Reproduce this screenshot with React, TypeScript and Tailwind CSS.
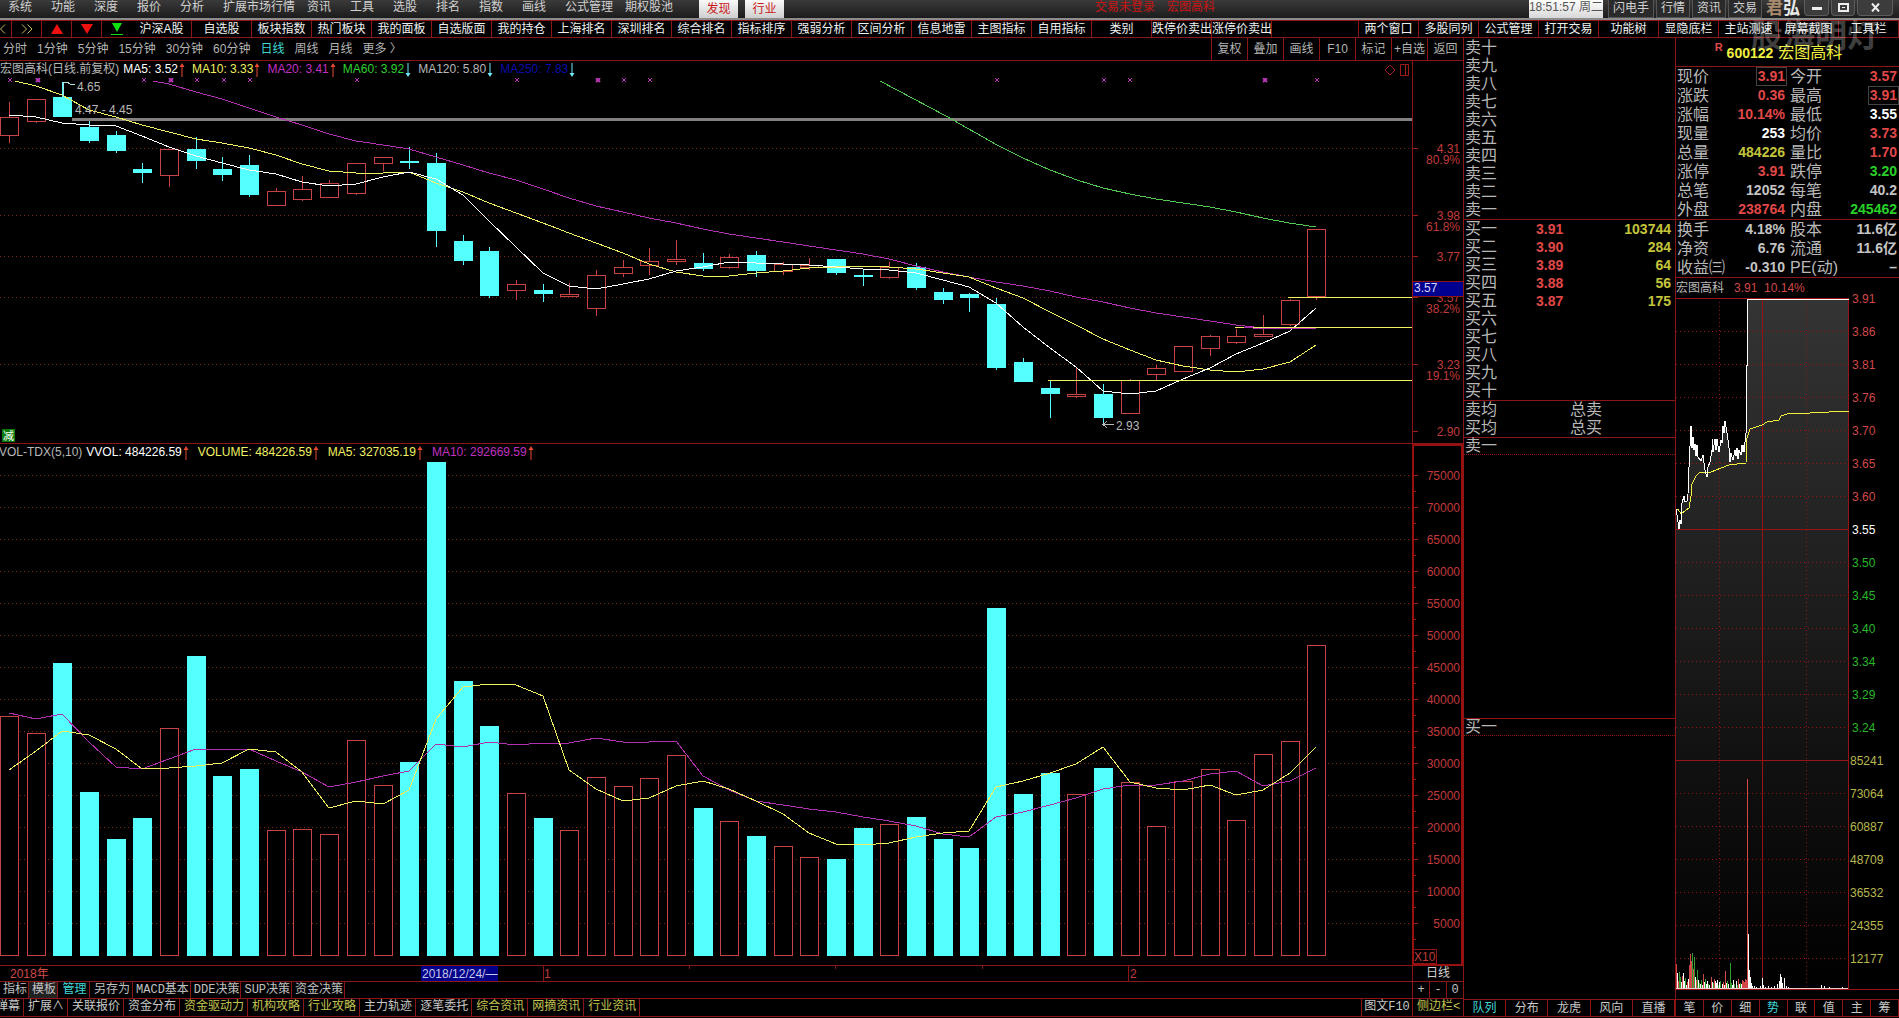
import { clsx } from "clsx";

type Tone = "red" | "green" | "white" | "yellow" | "gray";

type Candle = [kind: "up" | "down", high: number, top: number, bottom: number, low: number];

const toneClass: Record<Tone, string> = {
  red: "text-[#e04848]",
  green: "text-[#28d028]",
  white: "text-white",
  yellow: "text-[#c4c43c]",
  gray: "text-[#c4c4c4]",
};

const menuItems = [
  "系统", "功能", "深度", "报价", "分析", "扩展市场行情", "资讯", "工具",
  "选股", "排名", "指数", "画线", "公式管理", "期权股池",
];

const toolbarLeft = [
  "沪深A股", "自选股", "板块指数", "热门板块", "我的面板", "自选版面", "我的持仓",
  "上海排名", "深圳排名", "综合排名", "指标排序", "强弱分析", "区间分析", "信息地雷",
  "主图指标", "自用指标", "类别", "跌停价卖出", "涨停价卖出",
];

const toolbarRight = [
  "两个窗口", "多股同列", "公式管理", "打开交易", "功能树", "显隐底栏", "主站测速", "屏幕截图", "工具栏",
];

const periods = ["分时", "1分钟", "5分钟", "15分钟", "30分钟", "60分钟", "日线", "周线", "月线", "更多 〉"];
const chartActions = ["复权", "叠加", "画线", "F10", "标记", "+自选", "返回"];

const priceLegend = [
  { text: "MA5: 3.52", className: "text-white", up: true },
  { text: "MA10: 3.33", className: "text-[#f0f060]", up: true },
  { text: "MA20: 3.41", className: "text-[#c030c0]", up: true },
  { text: "MA60: 3.92", className: "text-[#30d030]", up: false },
  { text: "MA120: 5.80", className: "text-[#b8b8b8]", up: false },
  { text: "MA250: 7.83", className: "text-[#0c0ca8]", up: false },
];

const volumeLegend = [
  { text: "VVOL: 484226.59", className: "text-white", up: true },
  { text: "VOLUME: 484226.59", className: "text-[#f0f060]", up: true },
  { text: "MA5: 327035.19", className: "text-[#f0f060]", up: true },
  { text: "MA10: 292669.59", className: "text-[#c030c0]", up: true },
];

const candles: Candle[] = [
  ["up", 24, 39, 58, 65], ["up", 21, 21, 44, 45], ["down", 4, 19, 39, 39], ["down", 43, 49, 63, 65],
  ["down", 53, 57, 73, 75], ["down", 85, 91, 95, 105], ["up", 71, 71, 98, 109], ["down", 59, 71, 83, 91],
  ["down", 79, 91, 97, 103], ["down", 77, 87, 117, 119], ["up", 110, 113, 128, 128], ["up", 98, 111, 122, 123],
  ["up", 102, 105, 120, 120], ["up", 85, 85, 116, 117], ["up", 79, 79, 86, 93], ["down", 69, 83, 85, 91],
  ["down", 75, 85, 153, 169], ["down", 157, 163, 183, 187], ["down", 169, 173, 218, 220], ["up", 202, 206, 213, 222],
  ["down", 206, 212, 216, 224], ["up", 205, 216, 219, 219], ["up", 192, 197, 231, 238], ["up", 182, 189, 196, 199],
  ["up", 170, 183, 188, 197], ["up", 162, 181, 184, 187], ["down", 175, 185, 191, 193], ["up", 176, 179, 190, 191],
  ["down", 173, 177, 193, 199], ["up", 184, 186, 194, 197], ["up", 180, 187, 190, 192], ["down", 181, 181, 195, 197],
  ["down", 191, 197, 199, 208], ["up", 184, 189, 200, 201], ["down", 185, 189, 210, 212], ["down", 210, 214, 222, 226],
  ["down", 215, 216, 220, 234], ["down", 220, 226, 290, 292], ["down", 280, 284, 304, 304], ["down", 303, 310, 316, 340],
  ["up", 289, 316, 319, 320], ["down", 306, 316, 340, 348], ["up", 301, 302, 336, 336], ["up", 287, 290, 297, 302],
  ["up", 268, 268, 294, 294], ["up", 257, 258, 271, 278], ["up", 251, 258, 265, 266], ["up", 237, 256, 259, 259],
  ["up", 221, 222, 247, 248], ["up", 151, 151, 219, 222],
];

const ma5 = [
  37, 39, 45, 47, 48, 58, 69, 78, 85, 92, 96, 104, 108, 106, 99, 94, 101, 117, 143, 169, 195, 208, 211, 206, 201,
  193, 189, 184, 185, 186, 187, 189, 191, 192, 195, 202, 209, 225, 249, 270, 289, 313, 316, 313, 301, 290, 276, 265, 253, 230,
];
const ma10 = [
  8, 17, 32, 39, 47, 54, 61, 65, 70, 77, 86, 93, 95, 95, 94, 105, 114, 125, 135, 145, 155, 165, 175, 186, 194,
  198, 198, 195, 193, 190, 189, 188, 189, 191, 195, 199, 210, 220, 234, 247, 261, 272, 282, 288, 292, 294, 291, 284, 267,
];
const ma20 = [
  6, 14, 21, 30, 39, 47, 56, 63, 67, 71, 79, 87, 95, 102, 111, 120, 128, 134, 140, 145, 151, 156, 160, 164, 168,
  172, 176, 181, 188, 194, 199, 204, 208, 213, 219, 224, 230, 235, 239, 243, 247, 250, 251, 250,
];
const ma60 =
  "880,3 946,38 997,67 1023,80 1050,92 1077,102 1103,110 1130,116 1156,121 1183,125 1210,129 1236,134 1263,140 1289,145 1316,149";

const volumeTops = [
  256, 273, 203, 332, 379, 358, 268, 196, 316, 309, 370, 369, 374, 280, 325, 302, 2, 221, 266, 333, 358, 370, 317, 326, 318,
  295, 348, 361, 376, 386, 397, 399, 368, 364, 357, 379, 388, 148, 334, 313, 334, 308, 322, 366, 321, 309, 360, 294, 281, 185,
];
const volumeMa5 = [
  310, 291, 271, 275, 289, 309, 308, 306, 303, 289, 292, 312, 348, 341, 344, 330, 259, 227, 224, 225, 236, 310, 329, 341, 338,
  326, 321, 329, 341, 354, 373, 384, 385, 383, 377, 373, 371, 327, 321, 313, 304, 287, 322, 328, 330, 325, 335, 330, 313, 287,
];
const volumeMa10 = [
  253, 259, 254, 282, 307, 309, 299, 289, 289, 289, 301, 312, 327, 322, 316, 311, 284, 287, 282, 285, 283, 283, 278, 282, 282,
  281, 316, 330, 341, 345, 349, 352, 357, 361, 366, 374, 377, 357, 352, 345, 338, 329, 325, 325, 321, 314, 311, 326, 321, 308,
];

const crossMarks = [10, 144, 197, 224, 250, 357, 517, 624, 650, 997, 1104, 1130, 1317];
const boldMarks = [38, 171, 598, 1265];

const priceGrid = [70, 137, 178, 219, 286];
const priceAxis = [
  { y: 71, text: "4.31" },
  { y: 82, text: "80.9%" },
  { y: 138, text: "3.98" },
  { y: 149, text: "61.8%" },
  { y: 179, text: "3.77" },
  { y: 220, text: "3.57" },
  { y: 231, text: "38.2%" },
  { y: 287, text: "3.23" },
  { y: 298, text: "19.1%" },
  { y: 354, text: "2.90" },
];

const volumeAxis = Array.from({ length: 15 }, (_, i) => ({
  y: Math.round(14.5 + i * 32.07),
  text: String(75000 - i * 5000),
}));

const indicatorTabs = ["指标", "模板", "管理", "另存为", "MACD基本", "DDE决策", "SUP决策", "资金决策"];
const infoTabs = [
  { text: "弹幕", hot: false },
  { text: "扩展∧", hot: false },
  { text: "关联报价", hot: false },
  { text: "资金分布", hot: false },
  { text: "资金驱动力", hot: true },
  { text: "机构攻略", hot: true },
  { text: "行业攻略", hot: true },
  { text: "主力轨迹", hot: false },
  { text: "逐笔委托", hot: false },
  { text: "综合资讯", hot: true },
  { text: "网摘资讯", hot: true },
  { text: "行业资讯", hot: true },
];

const asks = ["卖十", "卖九", "卖八", "卖七", "卖六", "卖五", "卖四", "卖三", "卖二", "卖一"];
const bids = [
  ["买一", "3.91", "103744"],
  ["买二", "3.90", "284"],
  ["买三", "3.89", "64"],
  ["买四", "3.88", "56"],
  ["买五", "3.87", "175"],
  ["买六", "", ""],
  ["买七", "", ""],
  ["买八", "", ""],
  ["买九", "", ""],
  ["买十", "", ""],
];

type QuoteRow = { a: string; av: string; at: Tone; b: string; bv: string; bt: Tone; boxA?: boolean; boxB?: boolean };

const quoteRows: QuoteRow[] = [
  { a: "现价", av: "3.91", at: "red", b: "今开", bv: "3.57", bt: "red", boxA: true },
  { a: "涨跌", av: "0.36", at: "red", b: "最高", bv: "3.91", bt: "red", boxB: true },
  { a: "涨幅", av: "10.14%", at: "red", b: "最低", bv: "3.55", bt: "white" },
  { a: "现量", av: "253", at: "white", b: "均价", bv: "3.73", bt: "red" },
  { a: "总量", av: "484226", at: "yellow", b: "量比", bv: "1.70", bt: "red" },
  { a: "涨停", av: "3.91", at: "red", b: "跌停", bv: "3.20", bt: "green" },
  { a: "总笔", av: "12052", at: "gray", b: "每笔", bv: "40.2", bt: "gray" },
  { a: "外盘", av: "238764", at: "red", b: "内盘", bv: "245462", bt: "green" },
];

const fundamentals: QuoteRow[] = [
  { a: "换手", av: "4.18%", at: "gray", b: "股本", bv: "11.6亿", bt: "gray" },
  { a: "净资", av: "6.76", at: "gray", b: "流通", bv: "11.6亿", bt: "gray" },
  { a: "收益㈢", av: "-0.310", at: "gray", b: "PE(动)", bv: "–", bt: "gray" },
];

const intradayAxis = [
  "3.91", "3.86", "3.81", "3.76", "3.70", "3.65", "3.60", "3.55", "3.50", "3.45", "3.40", "3.34", "3.29", "3.24",
  "85241", "73064", "60887", "48709", "36532", "24355", "12177",
];

const intradayPrice =
  "0,211 1,217 3,231 4,222 5,226 6,205 8,198 9,204 11,203 12,196 13,169 15,128 16,150 17,139 18,152 19,146 20,158 21,147 22,159 25,163 27,157 29,172 31,179 32,169 34,164 36,152 36,141 37,154 39,141 40,152 41,141 43,154 45,142 46,145 47,128 48,135 49,123 51,135 52,142 53,150 54,164 55,155 57,162 59,152 60,158 61,150 62,161 63,152 65,157 66,147 67,154 67,147 68,154 70,135 70,67 71,67 71,1 173,1";
const intradayAverage =
  "0,211 2,211 5,216 9,213 13,210 15,198 16,186 20,178 23,175 35,174 45,170 53,167 70,165 71,140 74,131 86,127 91,124 103,122 105,118 111,116 134,115 173,113";

const intradayVolume: [number, number, string][] = [
  [0, 25, "r"], [1, 16, "w"], [2, 8, "r"], [3, 17, "g"], [4, 12, "g"], [5, 7, "w"], [6, 13, "r"], [7, 16, "w"],
  [8, 8, "w"], [9, 11, "g"], [10, 4, "w"], [11, 7, "r"], [12, 10, "w"], [13, 24, "r"], [14, 35, "r"], [15, 28, "r"],
  [16, 36, "g"], [17, 20, "r"], [18, 32, "g"], [19, 12, "w"], [20, 9, "r"], [21, 19, "g"], [22, 9, "w"], [23, 6, "g"],
  [24, 5, "w"], [25, 9, "g"], [26, 4, "w"], [27, 15, "r"], [28, 7, "w"], [29, 10, "g"], [30, 5, "w"], [31, 8, "w"],
  [32, 5, "g"], [33, 4, "w"], [35, 12, "r"], [36, 7, "w"], [37, 6, "g"], [38, 10, "r"], [39, 8, "w"], [40, 6, "w"],
  [41, 9, "w"], [42, 4, "g"], [43, 7, "w"], [44, 8, "g"], [46, 5, "w"], [47, 7, "r"], [48, 4, "w"], [49, 18, "r"],
  [50, 6, "w"], [51, 8, "g"], [52, 5, "w"], [54, 26, "g"], [55, 6, "g"], [56, 4, "w"], [57, 9, "w"], [58, 5, "g"],
  [60, 8, "w"], [61, 4, "g"], [62, 10, "r"], [63, 5, "w"], [64, 6, "g"], [65, 5, "w"], [66, 9, "r"], [67, 8, "r"],
  [68, 7, "r"], [69, 10, "r"], [70, 9, "r"], [71, 210, "r"], [72, 55, "w"], [73, 19, "w"], [74, 12, "w"], [75, 6, "w"],
  [76, 3, "w"], [78, 3, "w"], [80, 2, "w"], [84, 3, "w"], [86, 11, "w"], [87, 4, "w"], [89, 2, "w"], [92, 3, "w"],
  [95, 2, "w"], [98, 3, "w"], [101, 5, "w"], [103, 8, "w"], [104, 15, "w"], [105, 12, "w"], [106, 6, "w"], [108, 11, "w"],
  [110, 3, "w"], [112, 2, "w"], [145, 4, "w"], [148, 3, "w"], [153, 2, "w"], [166, 2, "w"],
];

const barFill: Record<string, string> = { r: "#d04848", g: "#2f9e2f", w: "#ffffff" };

function candleX(index: number) {
  return Math.round(9 + index * 26.68);
}

function toPoints(values: number[], from = 0) {
  return values.map((y, i) => `${candleX(i + from)},${y}`).join(" ");
}

function TitleBar() {
  return (
    <header className="flex h-[18px] items-start bg-linear-to-b from-[#3a3a3a] to-[#1c1c1c] leading-[15px] text-[#d0d0d0]">
      <nav className="flex">
        {menuItems.map((item) => (
          <button key={item} type="button" className="min-w-[43px] pr-[4px] pl-[8px] text-left whitespace-nowrap">
            {item}
          </button>
        ))}
      </nav>
      <div className="ml-[22px] flex gap-[7px] text-[#c81818]">
        {["发现", "行业"].map((item) => (
          <button key={item} type="button" className="h-[18px] w-[39px] bg-linear-to-b from-[#fafafa] to-[#cfcfcf] leading-[15px]">
            {item}
          </button>
        ))}
      </div>
      <div className="ml-auto flex gap-3 pr-[314px] text-[#c81414]">
        <span>交易未登录</span>
        <span>宏图高科</span>
      </div>
      <time className="h-[18px] w-[74px] bg-linear-to-b from-white to-[#d8d8d8] text-center text-[#555] whitespace-nowrap">
        18:51:57 周二
      </time>
      <div className="ml-[5px] flex gap-[2px]">
        {["闪电手", "行情", "资讯", "交易"].map((item) => (
          <button key={item} type="button" className="h-[18px] border-x border-b border-[#555] bg-[#2a2a2a] px-[4px] leading-[15px]">
            {item}
          </button>
        ))}
      </div>
      <div className="ml-[4px] flex w-[36px] text-[17px] leading-[17px] font-bold">
        <span className="text-[#a88a6c]">君</span>
        <span className="text-[#e8e8e8]">弘</span>
      </div>
      <div className="flex gap-[2px] pr-[6px] pl-[2px]">
        <button type="button" aria-label="最小化" className="flex h-[16px] w-[25px] items-center justify-center rounded-b border border-t-0 border-[#5c5c5c] bg-[#3c3c3c]">
          <svg width="10" height="10" viewBox="0 0 10 10"><rect x="0" y="4" width="10" height="3" fill="#eee" /></svg>
        </button>
        <button type="button" aria-label="最大化" className="flex h-[16px] w-[24px] items-center justify-center rounded-b border border-t-0 border-[#5c5c5c] bg-[#3c3c3c]">
          <svg width="11" height="9" viewBox="0 0 11 9"><rect x="1" y="1" width="9" height="7" fill="none" stroke="#eee" strokeWidth="2" /><rect x="4" y="4" width="3" height="1" fill="#eee" /></svg>
        </button>
        <button type="button" aria-label="关闭" className="flex h-[16px] w-[36px] items-center justify-center rounded-b border border-t-0 border-[#5c5c5c] bg-[#3c3c3c]">
          <svg width="9" height="9" viewBox="0 0 9 9"><path d="M1 0.5 L8 8.5 M8 0.5 L1 8.5" stroke="#eee" strokeWidth="2" /></svg>
        </button>
      </div>
    </header>
  );
}

function Toolbar() {
  const cell = "w-[60px] border-r border-[#8c1616] text-center whitespace-nowrap";
  const iconCell = "flex w-[30px] items-center justify-center border-r border-[#8c1616]";
  return (
    <div className="flex h-[18px] border-y border-[#8c1616] leading-[16px] text-[#f0f0f0]">
      <button type="button" aria-label="上一页" className="flex w-[12px] items-center border-r border-[#8c1616]">
        <svg width="6" height="10" viewBox="0 0 6 10"><path d="M5 0.5 L0.5 5 L5 9.5" fill="none" stroke="#c8b860" /></svg>
      </button>
      <button type="button" aria-label="下一页" className={iconCell}>
        <svg width="12" height="10" viewBox="0 0 12 10"><path d="M1 0.5 L5.5 5 L1 9.5 M6.5 0.5 L11 5 L6.5 9.5" fill="none" stroke="#c8b860" /></svg>
      </button>
      <button type="button" aria-label="上移" className={iconCell}>
        <svg width="12" height="10" viewBox="0 0 12 10"><path d="M6 0 L12 10 H0 Z" fill="#f01010" /></svg>
      </button>
      <button type="button" aria-label="下移" className={iconCell}>
        <svg width="12" height="10" viewBox="0 0 12 10"><path d="M0 0 H12 L6 10 Z" fill="#f01010" /></svg>
      </button>
      <button type="button" aria-label="到底" className="flex w-[30px] items-center justify-center">
        <svg width="12" height="12" viewBox="0 0 12 12"><path d="M1 0 H11 L6 9 Z M0 11 H12 V12 H0 Z" fill="#10e010" /></svg>
      </button>
      {toolbarLeft.map((item) => (
        <button key={item} type="button" className={cell}>
          {item}
        </button>
      ))}
      <div className="ml-auto flex border-l border-[#8c1616]">
        {toolbarRight.map((item) => (
          <button key={item} type="button" className={cell}>
            {item}
          </button>
        ))}
      </div>
    </div>
  );
}

function PeriodBar() {
  return (
    <div className="flex h-[23px] border-b border-[#8c1616] leading-[23px] text-[#b4b4b4]">
      <div className="flex gap-[10px] pl-[3px]">
        {periods.map((item) => (
          <button key={item} type="button" className={clsx("whitespace-nowrap", item === "日线" && "text-[#40d8d8]")}>
            {item}
          </button>
        ))}
      </div>
      <div className="ml-auto flex">
        {chartActions.map((item) => (
          <button key={item} type="button" className="w-[36px] border-l border-[#8c1616] text-center whitespace-nowrap">
            {item}
          </button>
        ))}
      </div>
    </div>
  );
}

function Legend({ items }: { items: typeof priceLegend }) {
  return (
    <>
      {items.map((item) => (
        <span key={item.text} className={clsx("flex items-center gap-[1px] whitespace-nowrap", item.className)}>
          {item.text}
          <svg width="6" height="14" viewBox="0 0 6 14">
            {item.up ? (
              <path d="M3 0 L5.5 4 H3.5 V14 H2.5 V4 H0.5 Z" fill="#e84830" />
            ) : (
              <path d="M2.5 0 H3.5 V10 H5.5 L3 14 L0.5 10 H2.5 Z" fill="#70e8f8" />
            )}
          </svg>
        </span>
      ))}
    </>
  );
}

function PriceChart() {
  return (
    <section>
      <div className="flex h-[17px] leading-[17px]">
        <div className="flex flex-1 items-center gap-[7px] border-r border-[#8c1616]">
          <span className="-mr-[3px] text-[#b8b8b8]">宏图高科(日线.前复权)</span>
          <Legend items={priceLegend} />
          <svg className="mr-[2px] ml-auto" width="26" height="12" viewBox="0 0 26 12" fill="none" stroke="#a01c1c">
            <path d="M6 1 L11 6 L6 11 L1 6 Z M16.5 0.5 H24.5 V11.5 H16.5 Z M21.5 0.5 V11.5" />
          </svg>
        </div>
        <div className="w-[50px]" />
      </div>
      <svg className="block h-auto w-full" viewBox="0 0 1463 366" fontSize="12" shapeRendering="crispEdges">
        {priceGrid.map((y) => (
          <line key={y} x1="0" x2="1412" y1={y + 0.5} y2={y + 0.5} stroke="#7a2418" strokeDasharray="1 3" />
        ))}
        {[...priceGrid, 353].map((y) => (
          <line key={y} x1="1413" x2="1418" y1={y + 0.5} y2={y + 0.5} stroke="#a01c1c" />
        ))}
        <rect x="72" y="40" width="1340" height="3" fill="#858080" />
        {candles.map(([kind, high, top, bottom, low], i) => {
          const x = candleX(i);
          const color = kind === "up" ? "#c84444" : "#54ffff";
          return (
            <g key={i}>
              <line x1={x + 0.5} x2={x + 0.5} y1={high} y2={top} stroke={color} />
              <line x1={x + 0.5} x2={x + 0.5} y1={bottom} y2={low} stroke={color} />
              {kind === "up" ? (
                <rect x={x - 8.5} y={top + 0.5} width="18" height={Math.max(bottom - top - 1, 1)} fill="none" stroke={color} />
              ) : (
                <rect x={x - 9} y={top} width="19" height={bottom - top} fill={color} />
              )}
            </g>
          );
        })}
        <g fill="none">
          <polyline points={ma60} stroke="#50c850" />
          <polyline points={`153,3 ${toPoints(ma20, 6)}`} stroke="#b030b0" />
          <polyline points={`15,3 ${toPoints(ma10, 1)}`} stroke="#f0f060" />
          <polyline points={toPoints(ma5)} stroke="#ffffff" />
          <path d="M1288 219.5 H1412 M1235 249.5 H1412 M1048 302.5 H1412" stroke="#f0f060" />
          <path d="M1244 249.5 L1262 250.5 H1316" stroke="#b030b0" />
          <path d="M63.5 19 V4 H67 M67 4 L70 6 H75" stroke="#a8e0e0" />
          <path d="M1103.5 348 V346.5 H1114 M1107 343 L1103 346.5 L1107 350" stroke="#b8b8b8" />
        </g>
        <g stroke="#b838b8" fill="none" shapeRendering="auto">
          {crossMarks.map((x) => (
            <path key={x} d={`M${x - 2} 0 L${x + 2} 4 M${x + 2} 0 L${x - 2} 4`} />
          ))}
          {boldMarks.map((x) => (
            <path key={x} d={`M${x - 2} 0 L${x + 2} 4 M${x + 2} 0 L${x - 2} 4`} strokeWidth="2" />
          ))}
        </g>
        <g fill="#b8b8b8">
          <text x="77" y="13">4.65</text>
          <text x="75" y="36">4.47 - 4.45</text>
          <text x="1116" y="352">2.93</text>
        </g>
        <rect x="2" y="351" width="13" height="13" fill="#0a7a0a" />
        <text x="3" y="362" fontSize="11" fill="#ffffff">减</text>
        <g fill="#c03c3c" textAnchor="end">
          {priceAxis.map((label) => (
            <text key={label.y} x="1460" y={label.y + 4}>{label.text}</text>
          ))}
        </g>
        <rect x="1412" y="203" width="51" height="15" fill="#000090" stroke="#8c1616" />
        <text x="1414" y="214" fill="#d8d8f8">3.57</text>
        <path d="M1412.5 0 V366 M0 365.5 H1463" stroke="#8c1616" />
      </svg>
    </section>
  );
}

function VolumeChart() {
  return (
    <section>
      <div className="flex h-[17px] leading-[17px]">
        <div className="flex flex-1 items-center gap-[9px]">
          <span className="-mr-[5px] -ml-[1px] text-[#b8b8b8]">VOL-TDX(5,10)</span>
          <Legend items={volumeLegend} />
        </div>
        <div className="w-[51px] border-x-2 border-t-2 border-[#981010]" />
      </div>
      <svg className="block h-auto w-full" viewBox="0 1 1463 505" fontSize="12" shapeRendering="crispEdges">
        {volumeAxis.map((tick) => (
          <g key={tick.text}>
            <line x1="0" x2="1412" y1={tick.y + 0.5} y2={tick.y + 0.5} stroke="#7a2418" strokeDasharray="1 3" />
            <path d={`M1414 ${tick.y + 0.5} H1418 M1414 ${tick.y + 16.5} H1416`} stroke="#a01c1c" />
            <text x="1460" y={tick.y + 5} textAnchor="end" fill="#c03c3c">{tick.text}</text>
          </g>
        ))}
        {volumeTops.map((top, i) => {
          const x = candleX(i);
          return candles[i][0] === "up" ? (
            <rect key={i} x={x - 8.5} y={top + 0.5} width="18" height={495 - top} fill="#000000" stroke="#c84444" />
          ) : (
            <rect key={i} x={x - 9} y={top} width="19" height={496 - top} fill="#54ffff" />
          );
        })}
        <polyline points={toPoints(volumeMa10)} fill="none" stroke="#b030b0" />
        <polyline points={toPoints(volumeMa5)} fill="none" stroke="#f0f060" />
        <rect x="1413.5" y="489.5" width="23" height="14" fill="none" stroke="#8c1616" />
        <text x="1414" y="501" fill="#c03c3c">X10</text>
        <path d="M1413 0 V505 H1462 V0" fill="none" stroke="#981010" strokeWidth="2" />
        <path d="M0 505.5 H1412" stroke="#8c1616" />
      </svg>
    </section>
  );
}

function TimeAxis() {
  return (
    <div className="flex h-[16px] border-b border-[#8c1616] leading-[15px]">
      <div className="min-w-0 flex-1 border-r border-[#8c1616]">
        <svg className="block h-[15px] w-full" viewBox="0 0 1412 15" fontSize="12">
          <path d="M543.5 0 V15 M689.5 0 V3 M835.5 0 V3 M982.5 0 V3 M1128.5 0 V15" stroke="#8c1616" />
          <text x="10" y="12" fill="#d04848">2018年</text>
          <rect x="421" y="0" width="77" height="15" fill="#000088" />
          <text x="422" y="12" fill="#c8c8e8">2018/12/24/—</text>
          <text x="544" y="12" fill="#c03c3c">1</text>
          <text x="1130" y="12" fill="#c03c3c">2</text>
        </svg>
      </div>
      <button type="button" className="w-[50px] leading-[15px] text-[#d0d0d0]">日线</button>
    </div>
  );
}

function IndicatorTabs() {
  return (
    <div className="flex h-[17px] border-b border-[#8c1616] font-['Liberation_Mono','Noto_Sans_CJK_SC',monospace] leading-[16px] text-[#c0c0c0]">
      {indicatorTabs.map((tab, i) => (
        <button
          key={tab}
          type="button"
          className={clsx(
            "border-r border-[#8c1616] pr-[1px] pl-[3px] whitespace-nowrap",
            i === 1 && "bg-[#222]",
            tab === "管理" && "min-w-[32px] text-[#40d8d8]",
            i === 3 && "min-w-[43px]",
          )}
        >
          {tab}
        </button>
      ))}
      <div className="ml-auto flex w-[51px] border-l border-[#8c1616]">
        <button type="button" className="flex-1 border-r border-[#8c1616]">+</button>
        <button type="button" className="flex-1 border-r border-[#8c1616]">-</button>
        <button type="button" className="flex-1">0</button>
      </div>
    </div>
  );
}

function InfoTabs() {
  return (
    <div className="flex h-[18px] overflow-hidden border-b border-[#8c1616] font-['Liberation_Mono','Noto_Sans_CJK_SC',monospace] leading-[17px] text-[#c8c8c8]">
      {infoTabs.map((tab, i) => (
        <button
          key={tab.text}
          type="button"
          className={clsx(
            "border-r border-[#8c1616] whitespace-nowrap",
            i === 0 ? "-ml-[4px] pr-[3px]" : "pr-[3px] pl-[4px]",
            tab.hot && "text-[#c4c450]",
          )}
        >
          {tab.text}
        </button>
      ))}
      <div className="ml-auto flex">
        <button type="button" className="w-[51px] border-l border-[#8c1616] whitespace-nowrap">图文F10</button>
        <button type="button" className="w-[51px] border-l border-[#8c1616] pl-[1px] text-[#c4c450] whitespace-nowrap">侧边栏&lt;</button>
      </div>
    </div>
  );
}

function BottomTabs({ items, active }: { items: string[]; active: string }) {
  return (
    <div className="flex h-[18px] border-y border-[#8c1616] leading-[16px] text-[#c8c8c8]">
      {items.map((item) => (
        <button
          key={item}
          type="button"
          className={clsx("flex-1 border-r border-[#8c1616]", item === active && "text-[#40d8d8]")}
        >
          {item}
        </button>
      ))}
    </div>
  );
}

function OrderBook() {
  return (
    <aside className="flex w-[212px] shrink-0 flex-col border-l border-[#8c1616] pt-px text-[16px] leading-[18px] text-[#b8b8b8]">
      <table className="w-full border-b border-[#8c1616]">
        <tbody>
          {asks.map((name) => (
            <tr key={name} className="h-[18px]">
              <th scope="row" className="p-0 pl-px text-left font-normal">{name}</th>
            </tr>
          ))}
        </tbody>
      </table>
      <table className="w-full border-b border-[#8c1616]">
        <tbody>
          {bids.map(([name, price, volume]) => (
            <tr key={name} className="h-[18px]">
              <th scope="row" className="w-[72px] p-0 pl-px text-left font-normal">{name}</th>
              <td className="p-0 text-[14px] font-bold text-[#e04848]">{price}</td>
              <td className="p-0 pr-[4px] text-right text-[14px] font-bold text-[#c4c43c]">{volume}</td>
            </tr>
          ))}
        </tbody>
      </table>
      <div className="grid grid-cols-2 border-b border-[#8c1616] pl-px">
        <span>卖均</span>
        <span>总卖</span>
        <span>买均</span>
        <span>总买</span>
      </div>
      <div className="h-[17px] border-b border-dotted border-[#8c1616] pl-px leading-[16px]">卖一</div>
      <div className="flex-1 border-b border-[#8c1616]" />
      <div className="h-[17px] border-b border-dotted border-[#8c1616] pl-px leading-[16px]">买一</div>
      <div className="flex-1" />
      <div className="text-[12px]">
        <BottomTabs items={["队列", "分布", "龙虎", "风向", "直播"]} active="队列" />
      </div>
    </aside>
  );
}

function QuoteTable({ rows }: { rows: QuoteRow[] }) {
  return (
    <table className="w-full table-fixed border-b border-[#8c1616] text-[#b8b8b8]">
      <tbody>
        {rows.map((row) => (
          <tr key={row.a} className="h-[19px] leading-[19px] whitespace-nowrap">
            <th scope="row" className="w-[50px] p-0 pl-[1px] text-left font-normal">{row.a}</th>
            <td className={clsx("w-[60px] p-0 text-right text-[14px] font-bold", toneClass[row.at])}>
              <span className={clsx("inline-block h-[17px] px-px leading-[17px]", row.boxA && "outline outline-[#444]")}>{row.av}</span>
            </td>
            <th scope="row" className="w-[50px] p-0 pl-[4px] text-left font-normal">{row.b}</th>
            <td className={clsx("p-0 pr-px text-right text-[14px] font-bold", toneClass[row.bt])}>
              <span className={clsx("inline-block h-[17px] px-px leading-[17px]", row.boxB && "outline outline-[#444]")}>{row.bv}</span>
            </td>
          </tr>
        ))}
      </tbody>
    </table>
  );
}

function IntradayChart() {
  return (
    <svg className="block h-auto w-full overflow-visible" viewBox="0 0 223 699" fontSize="12" shapeRendering="crispEdges">
      <defs>
        <linearGradient id="intraday" x1="0" x2="0" y1="0" y2="691" gradientUnits="userSpaceOnUse">
          <stop offset="0" stopColor="#343434" />
          <stop offset="1" stopColor="#000000" />
        </linearGradient>
      </defs>
      <polygon points={`${intradayPrice} 173,691 0,691`} fill="url(#intraday)" />
      {intradayAxis.map((label, i) => {
        const y = 33 * i + 1;
        const solid = i === 0 || i === 7 || i === 14;
        const fill = i < 7 ? "#d04848" : i === 7 ? "#ffffff" : i < 14 ? "#28b828" : "#b8b850";
        return (
          <g key={label}>
            <line x1="0" x2="173" y1={y - 0.5} y2={y - 0.5} stroke="#981414" strokeDasharray={solid ? undefined : "1 3"} />
            <text x={i < 14 ? 176 : 174} y={y + 4} fill={fill}>{label}</text>
          </g>
        );
      })}
      <path d="M43.5 0 V691 M130.5 0 V691" stroke="#981414" strokeDasharray="1 3" />
      <path d="M86.5 0 V691 M172.5 0 V691 M0 691.5 H223" stroke="#981414" />
      {intradayVolume.map(([x, h, color]) => (
        <rect key={x} x={x} y={691 - h} width="1" height={h} fill={barFill[color]} />
      ))}
      <rect x="0" y="690" width="172" height="1" fill="#e8d0d0" />
      <polyline points={intradayAverage} fill="none" stroke="#f0f040" />
      <polyline points={intradayPrice} fill="none" stroke="#ffffff" />
    </svg>
  );
}

function QuotePanel() {
  return (
    <aside className="flex w-[224px] shrink-0 flex-col border-l border-[#8c1616] text-[16px]">
      <h1 className="flex h-[29px] items-center justify-center border-b border-[#8c1616] pt-px pr-[18px] leading-[28px] text-[#f0f040]">
        <sup className="mr-[4px] text-[11px] font-bold text-[#e04848]">R</sup>
        <span className="mr-[5px] text-[14px] font-bold">600122</span>
        宏图高科
      </h1>
      <QuoteTable rows={quoteRows} />
      <QuoteTable rows={fundamentals} />
      <div className="flex h-[20px] items-center gap-[10px] text-[12px] text-[#b8b8b8]">
        <span>宏图高科</span>
        <span className="text-[#d04848]">3.91&nbsp; 10.14%</span>
      </div>
      <IntradayChart />
      <div className="mt-auto text-[12px]">
        <BottomTabs items={["笔", "价", "细", "势", "联", "值", "主", "筹"]} active="势" />
      </div>
    </aside>
  );
}

export default function App() {
  return (
    <div className="relative flex min-h-screen flex-col bg-black font-['Liberation_Sans','Noto_Sans_CJK_SC',sans-serif] text-[12px]">
      <TitleBar />
      <div className="h-[2px] bg-[#8c8c8c]" />
      <Toolbar />
      <main className="flex">
        <div className="min-w-0 flex-1">
          <PeriodBar />
          <PriceChart />
          <VolumeChart />
          <TimeAxis />
          <IndicatorTabs />
          <InfoTabs />
        </div>
        <OrderBook />
        <QuotePanel />
      </main>
      <div className="pointer-events-none absolute top-[18px] right-[20px] text-[32px] leading-[36px] font-bold text-white/25">
        股海明灯
      </div>
    </div>
  );
}
